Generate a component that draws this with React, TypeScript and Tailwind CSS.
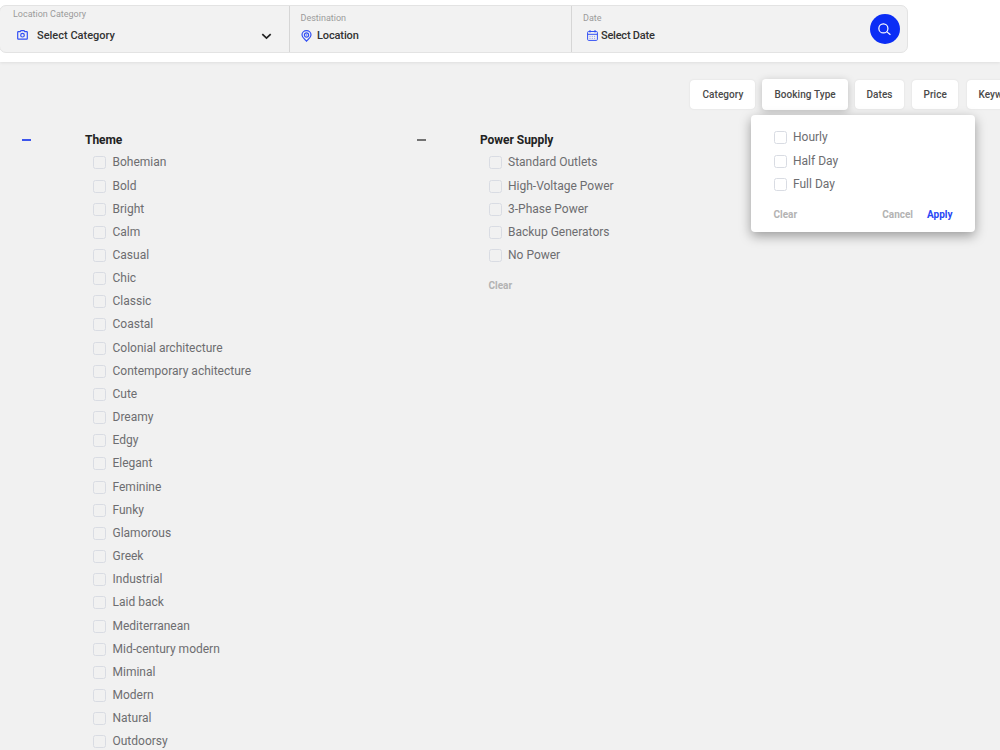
import React from 'react';

const themes = [
  'Bohemian', 'Bold', 'Bright', 'Calm', 'Casual', 'Chic', 'Classic', 'Coastal',
  'Colonial architecture', 'Contemporary achitecture', 'Cute', 'Dreamy', 'Edgy',
  'Elegant', 'Feminine', 'Funky', 'Glamorous', 'Greek', 'Industrial', 'Laid back',
  'Mediterranean', 'Mid-century modern', 'Miminal', 'Modern', 'Natural', 'Outdoorsy',
];
const power = ['Standard Outlets', 'High-Voltage Power', '3-Phase Power', 'Backup Generators', 'No Power'];

function Option({ label }: { label: string }) {
  return (
    <label className="flex h-[23.16px] items-center whitespace-nowrap text-[12px] text-[#6d6d70]">
      <span className="mr-[6.5px] mt-[2px] size-[13px] shrink-0 rounded-[2.5px] border border-[#d9dce3]" />
      <span className="pt-px">{label}</span>
    </label>
  );
}

function FilterButton({ label, className }: { label: string; className: string }) {
  return (
    <button className={`flex shrink-0 items-center whitespace-nowrap rounded-[4px] bg-white text-[10px] font-medium tracking-[0.06px] text-[#4a4a4a] ${className}`}>
      {label}
    </button>
  );
}

function Camera() {
  return (
    <svg className="h-[10px] w-[11px]" viewBox="0 0 11 10" fill="none" stroke="#3350f4" strokeWidth="1.2">
      <path d="M1.300 1.600h1.900L4 .6h3l.8 1h1.900q.6 0 .6.600v6.400q0 .6-.6.600H1.300q-.6 0-.6-.600V2.200q0-.6.600-.600Z" />
      <circle cx="5.500" cy="5.200" r="1.800" />
    </svg>
  );
}

function Pin() {
  return (
    <svg className="h-[12px] w-[11px]" viewBox="0 0 11 12" fill="none" stroke="#3350f4" strokeWidth="1.2">
      <path d="M5.500 11.200C4.500 9.800 1 7.900 1 5a4.500 4.300 0 0 1 9 0c0 2.900-3.500 4.800-4.500 6.200Z" />
      <circle cx="5.500" cy="5" r="2.100" />
      <circle cx="5.500" cy="5" r=".5" strokeWidth=".5" />
    </svg>
  );
}

function Calendar() {
  return (
    <svg className="h-[11px] w-[11px]" viewBox="0 0 11 11" fill="none" stroke="#3350f4">
      <rect x=".6" y="1.500" width="9.800" height="8.900" rx="1" />
      <path d="M.6 4.300h9.800M3 0v2.500M8 0v2.500" />
      <path d="M2.500 6.400h6M2.500 8.400h6" strokeWidth=".9" strokeDasharray="1 1.300" opacity=".6" />
    </svg>
  );
}

export default function App() {
  return (
    <div className="h-[750px] w-[1000px] overflow-hidden bg-[#f1f1f1] font-['Roboto',sans-serif]">
      <header className="h-[62px] bg-white pt-[5px] shadow-[0_1px_3px_rgba(0,0,0,0.08)]">
        <div className="-ml-px flex h-[48px] w-[909px] rounded-[7px] border border-[#e3e3e3] bg-[#f2f2f2]">
          <div className="w-[290px] border-r border-[#d6d6d6] pl-[13px] pt-[2px]">
            <div className="text-[9px] leading-[12px] text-[#9b9b9b]">Location Category</div>
            <div className="mt-[8px] flex h-[16px] items-center pl-[4px] text-[11px] font-medium text-[#333]">
              <span className="mb-[2px]"><Camera /></span>
              <span className="ml-[9px] pt-px">Select Category</span>
              <svg className="ml-auto mr-[17px] h-[7px] w-[11px]" viewBox="0 0 11 7" fill="none" stroke="#222" strokeWidth="1.700"><path d="m1.300 1.200 4.200 4 4.200-4" /></svg>
            </div>
          </div>
          <div className="w-[282px] border-r border-[#d6d6d6] pl-[10.500px] pt-[6px]">
            <div className="text-[9px] leading-[12px] text-[#9b9b9b]">Destination</div>
            <div className="mt-[3px] flex h-[16px] items-center pt-px text-[11px] font-medium tracking-[-0.12px] text-[#333]">
              <Pin /><span className="ml-[5.500px] pt-px">Location</span>
            </div>
          </div>
          <div className="flex flex-1 items-start justify-between pl-[11px] pt-[6px]">
            <div>
              <div className="text-[9px] leading-[12px] text-[#9b9b9b]">Date</div>
              <div className="mt-[3px] flex h-[16px] items-center pl-[4px] text-[11px] font-medium tracking-[-0.22px] text-[#333]">
                <Calendar /><span className="ml-[3px] pt-[2px]">Select Date</span>
              </div>
            </div>
            <button className="mr-[7.5px] mt-[2px] flex size-[30px] items-center justify-center rounded-full bg-[#0b2df5]">
              <svg className="mt-px size-[13px]" viewBox="0 0 14 14" fill="none" stroke="white" strokeWidth="1.300"><circle cx="5.800" cy="5.800" r="4.900" /><path d="m9.300 9.300 4.100 3.300" /></svg>
            </button>
          </div>
        </div>
      </header>

      <nav className="relative ml-[690px] mt-[17px] flex h-[31px] w-[310px] items-center">
        <FilterButton label="Category" className="h-[29px] w-[65px] pl-[12.500px] shadow-[0_0_2px_rgba(0,0,0,0.1)]" />
        <FilterButton label="Booking Type" className="ml-[7px] h-[31px] w-[86px] pl-[12.500px] shadow-[0_2px_9px_rgba(0,0,0,0.22)]" />
        <FilterButton label="Dates" className="ml-[7px] h-[29px] w-[49px] pl-[11.500px] shadow-[0_0_2px_rgba(0,0,0,0.1)]" />
        <FilterButton label="Price" className="ml-[8px] h-[29px] w-[46px] pl-[11.500px] shadow-[0_0_2px_rgba(0,0,0,0.1)]" />
        <FilterButton label="Keyword" className="ml-[9px] h-[29px] w-[64px] pl-[11.500px] shadow-[0_0_2px_rgba(0,0,0,0.1)]" />
        <div className="absolute left-[61px] top-[36px] z-10 h-[117px] w-[224px] rounded-[4px] bg-white px-[22.500px] pt-[10.400px] shadow-[0_4px_12px_rgba(0,0,0,0.36)]">
          <Option label="Hourly" />
          <Option label="Half Day" />
          <Option label="Full Day" />
          <div className="mt-[12.500px] flex h-[14px] items-center text-[10px] font-bold text-[#b3b3b3]">
            <button>Clear</button>
            <button className="ml-auto">Cancel</button>
            <button className="ml-[14px] text-[#2947f5]">Apply</button>
          </div>
        </div>
      </nav>

      <main className="flex pt-[22px]">
        <div className="ml-[22px] mt-[6.500px] h-[2px] w-[9px] bg-[#3c55ec]" />
        <section className="ml-[54px] w-[332px]">
          <h2 className="h-[18.300px] pt-px text-[12px] font-bold leading-[15px] tracking-[-0.05px] text-[#222]">Theme</h2>
          <div className="pl-[8px]">{themes.map((t) => <Option key={t} label={t} />)}</div>
        </section>
        <div className="mt-[6.500px] h-[2px] w-[9px] bg-[#737373]" />
        <section className="ml-[54px]">
          <h2 className="h-[18.300px] pt-px text-[12px] font-bold leading-[15px] tracking-[-0.05px] text-[#222]">Power Supply</h2>
          <div className="pl-[8.500px]">
            {power.map((t) => <Option key={t} label={t} />)}
            <button className="mt-[12.700px] block text-[10px] font-bold leading-[14px] text-[#b3b3b3]">Clear</button>
          </div>
        </section>
      </main>
    </div>
  );
}
